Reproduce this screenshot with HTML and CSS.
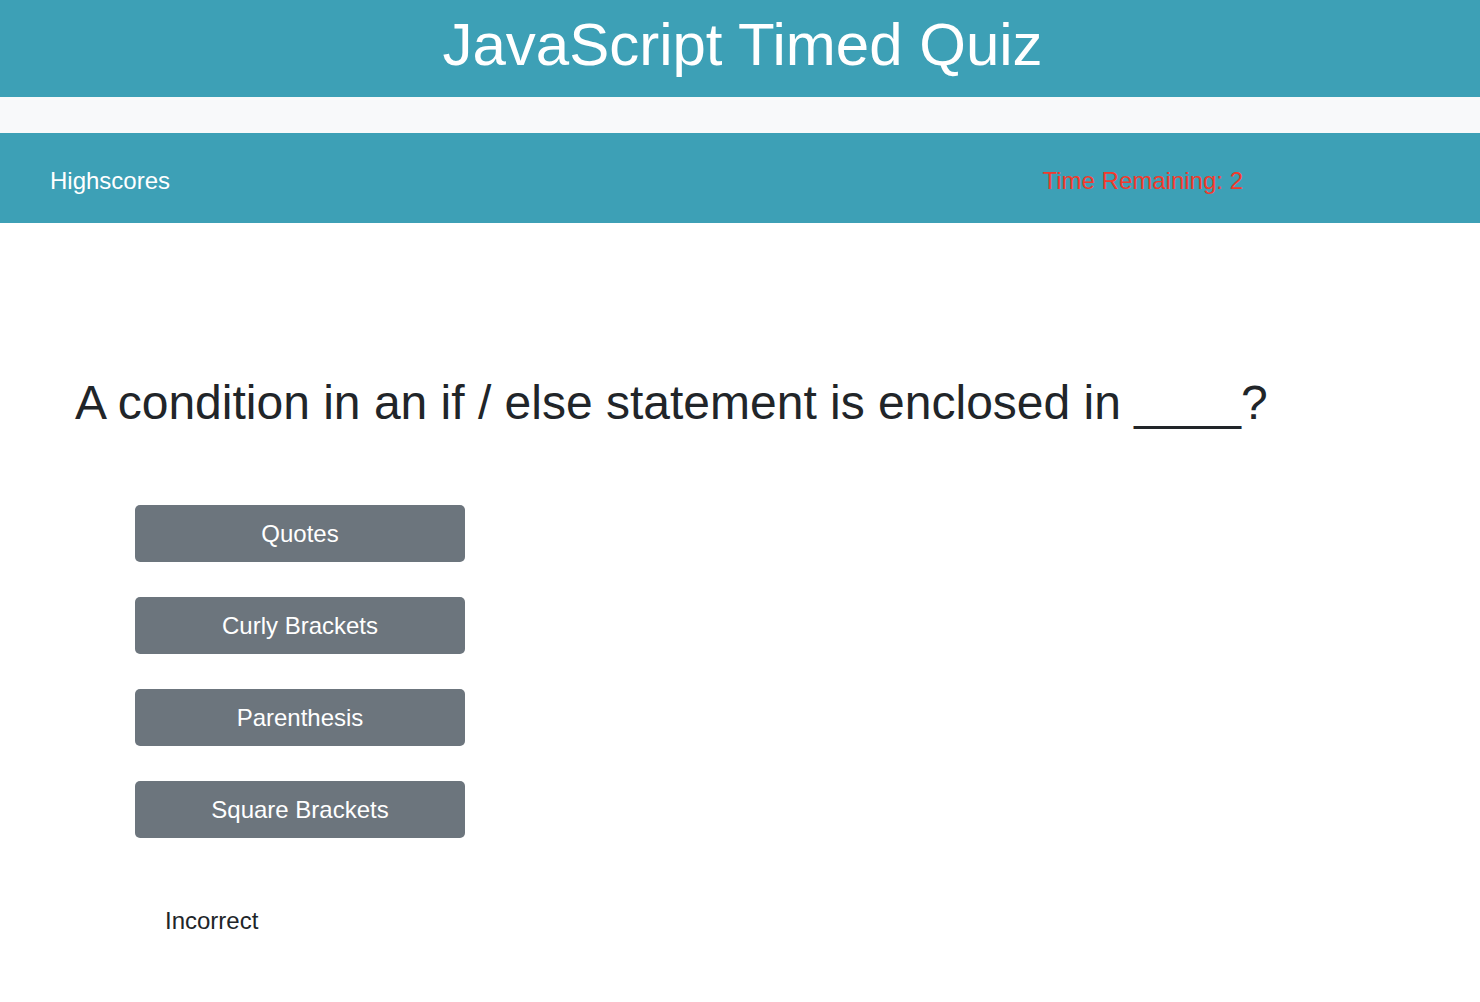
FILE: index.html
```html
<!DOCTYPE html>
<html lang="en">
<head>
<meta charset="utf-8">
<title>JavaScript Timed Quiz</title>
<link rel="stylesheet" href="styles.css">
</head>
<body>
<header class="banner">
  <h1 class="banner-title">JavaScript Timed Quiz</h1>
</header>
<div class="strip"></div>
<nav class="navbar">
  <a class="nav-link" href="#">Highscores</a>
  <span class="timer">Time Remaining: 2</span>
</nav>
<main class="quiz">
  <h2 class="question">A condition in an if / else statement is enclosed in ____?</h2>
  <div class="answers">
    <button class="answer">Quotes</button>
    <button class="answer">Curly Brackets</button>
    <button class="answer">Parenthesis</button>
    <button class="answer">Square Brackets</button>
  </div>
  <p class="feedback">Incorrect</p>
</main>
</body>
</html>
```

FILE: styles.css
```css
* { box-sizing: border-box; }
html, body {
  margin: 0;
  padding: 0;
  background: #ffffff;
  font-family: "Liberation Sans", Arial, sans-serif;
  color: #212529;
}
.banner {
  background: #3da0b6;
  height: 97px;
  display: flex;
  align-items: center;
  justify-content: center;
}
.banner-title {
  margin: 0;
  color: #ffffff;
  font-weight: 400;
  font-size: 60px;
  line-height: 1;
  padding-bottom: 8px;
  padding-left: 5px;
}
.strip {
  height: 36px;
  background: #f8f9fa;
}
.navbar {
  background: #3da0b6;
  height: 90px;
  display: flex;
  align-items: center;
  justify-content: space-between;
  padding: 6px 237px 0 50px;
  font-size: 24px;
}
.nav-link {
  color: #ffffff;
  text-decoration: none;
}
.timer {
  color: #f23a2c;
}
.quiz {
  padding: 150px 0 0 75px;
}
.question {
  margin: 0;
  font-size: 48px;
  font-weight: 400;
  line-height: 60px;
  color: #212529;
}
.answers {
  display: flex;
  flex-direction: column;
  align-items: flex-start;
  gap: 35px;
  margin: 72px 0 0 60px;
}
.answer {
  width: 330px;
  height: 57px;
  border: none;
  border-radius: 5px;
  background: #6c757d;
  color: #ffffff;
  font-family: "Liberation Sans", Arial, sans-serif;
  font-size: 24px;
  padding: 0;
}
.feedback {
  margin: 68px 0 0 90px;
  font-size: 24px;
  line-height: 30px;
}
```
